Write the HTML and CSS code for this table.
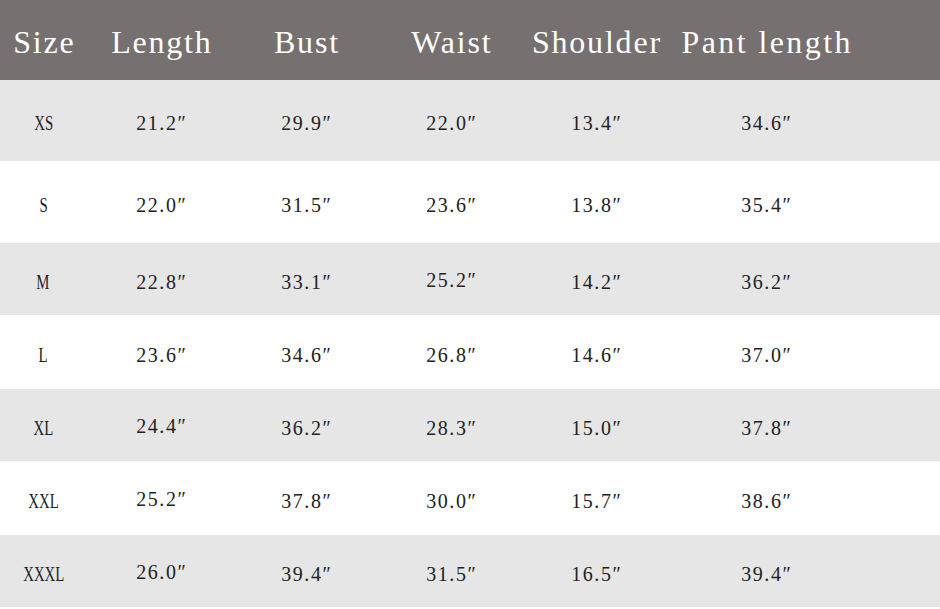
FILE: index.html
```html
<!DOCTYPE html>
<html>
<head>
<meta charset="utf-8">
<link rel="stylesheet" href="styles.css">
</head>
<body>
<div class="chart">
  <div class="row head">
    <div class="cell">Size</div>
    <div class="cell">Length</div>
    <div class="cell">Bust</div>
    <div class="cell">Waist</div>
    <div class="cell">Shoulder</div>
    <div class="cell wide">Pant length</div>
    <div class="cell"></div>
  </div>
  <div class="row grey h81">
    <div class="cell"><span class="sz">XS</span></div>
    <div class="cell">21.2″</div>
    <div class="cell">29.9″</div>
    <div class="cell">22.0″</div>
    <div class="cell">13.4″</div>
    <div class="cell">34.6″</div>
    <div class="cell"></div>
  </div>
  <div class="row h82">
    <div class="cell"><span class="sz">S</span></div>
    <div class="cell">22.0″</div>
    <div class="cell">31.5″</div>
    <div class="cell">23.6″</div>
    <div class="cell">13.8″</div>
    <div class="cell">35.4″</div>
    <div class="cell"></div>
  </div>
  <div class="row grey h72">
    <div class="cell"><span class="sz">M</span></div>
    <div class="cell">22.8″</div>
    <div class="cell">33.1″</div>
    <div class="cell up">25.2″</div>
    <div class="cell">14.2″</div>
    <div class="cell">36.2″</div>
    <div class="cell"></div>
  </div>
  <div class="row h74">
    <div class="cell"><span class="sz">L</span></div>
    <div class="cell">23.6″</div>
    <div class="cell">34.6″</div>
    <div class="cell">26.8″</div>
    <div class="cell">14.6″</div>
    <div class="cell">37.0″</div>
    <div class="cell"></div>
  </div>
  <div class="row grey h72">
    <div class="cell"><span class="sz">XL</span></div>
    <div class="cell up">24.4″</div>
    <div class="cell">36.2″</div>
    <div class="cell">28.3″</div>
    <div class="cell">15.0″</div>
    <div class="cell">37.8″</div>
    <div class="cell"></div>
  </div>
  <div class="row h74">
    <div class="cell"><span class="sz">XXL</span></div>
    <div class="cell up">25.2″</div>
    <div class="cell">37.8″</div>
    <div class="cell">30.0″</div>
    <div class="cell">15.7″</div>
    <div class="cell">38.6″</div>
    <div class="cell"></div>
  </div>
  <div class="row grey h72">
    <div class="cell"><span class="sz">XXXL</span></div>
    <div class="cell up">26.0″</div>
    <div class="cell">39.4″</div>
    <div class="cell">31.5″</div>
    <div class="cell">16.5″</div>
    <div class="cell">39.4″</div>
    <div class="cell"></div>
  </div>
</div>
</body>
</html>
```
FILE: styles.css
```css
html, body {
  margin: 0;
  padding: 0;
  background: #ffffff;
}
.chart {
  width: 940px;
  font-family: "Liberation Serif", "Times New Roman", serif;
  color: #222222;
}
.row {
  display: grid;
  grid-template-columns: 87px 148px 142px 148px 142px 198px 1fr;
  align-items: center;
  background: #ffffff;
}
.row.grey {
  background: #e6e6e6;
}
.cell {
  text-align: center;
  white-space: nowrap;
  font-size: 20px;
  letter-spacing: 1.6px;
  padding-top: 6px;
  padding-left: 1.6px;
}
.cell.up {
  padding-top: 2px;
}
.head {
  height: 80px;
  background: #767170;
  color: #ffffff;
}
.head .cell {
  font-size: 32px;
  letter-spacing: 1.8px;
  padding-top: 4px;
  padding-left: 1.8px;
}
.head .cell.wide {
  letter-spacing: 2.4px;
  padding-left: 2.4px;
}
.sz {
  display: inline-block;
  transform: scaleX(0.74);
  letter-spacing: 0;
  margin-left: -2px;
}
.h81 { height: 81px; }
.h82 { height: 82px; }
.h72 { height: 72px; }
.h74 { height: 74px; }
```
